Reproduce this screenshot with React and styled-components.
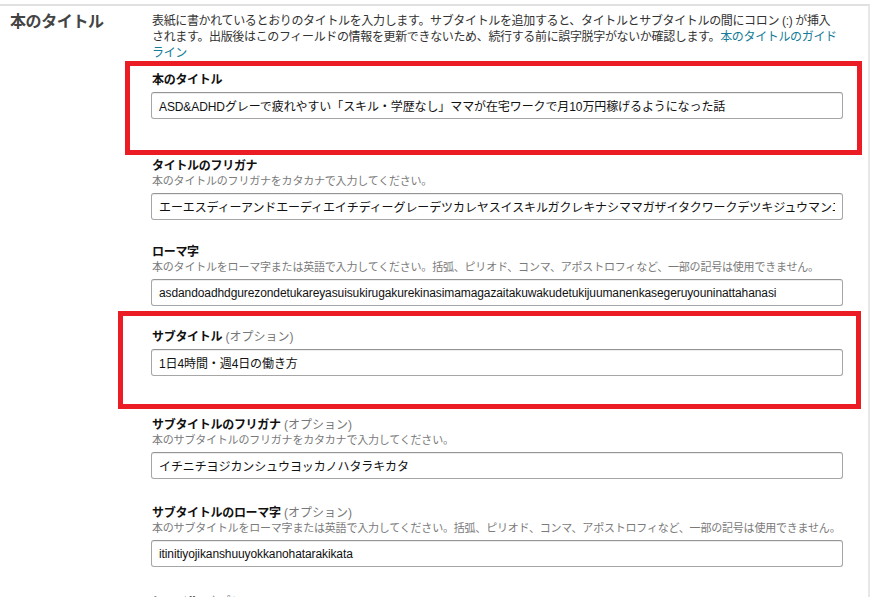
import styled, { createGlobalStyle } from "styled-components";

const GlobalStyle = createGlobalStyle`
  html, body {
    margin: 0;
    height: 100%;
    overflow: hidden;
    background: #fff;
  }
  body {
    font-family: "Liberation Sans", "Noto Sans CJK JP", sans-serif;
    color: #111;
  }
`;

const Page = styled.div`
  height: 100vh;
  overflow: hidden;
  padding-top: 4px;
  box-sizing: border-box;
`;

const Panel = styled.div`
  width: 870px;
  min-height: 100%;
  box-sizing: border-box;
  border-top: 2px solid #e0e0e0;
  border-right: 2px solid #e7e7e7;
`;

const Section = styled.div`
  display: grid;
  grid-template-columns: 151px 1fr;
  padding-top: 7px;
`;

const SectionTitle = styled.h2`
  margin: 0;
  padding-left: 10px;
  font-size: 16px;
  line-height: 18px;
  font-weight: 700;
  color: #444;
  letter-spacing: -0.4px;
`;

const Body = styled.div`
  display: flex;
  flex-direction: column;
  padding-right: 25px;
`;

const Description = styled.p`
  margin: 0 0 0 1px;
  font-size: 12px;
  line-height: 16px;
  color: #333;
  letter-spacing: -0.35px;
  white-space: nowrap;
`;

const GuideLink = styled.a`
  color: #137c98;
  text-decoration: none;
`;

const Highlight = styled.div`
  border: 5px solid #ec1c24;
  margin: 0 ${({ $mr }) => $mr}px ${({ $mb }) => $mb}px ${({ $ml }) => $ml}px;
  padding: ${({ $pt }) => $pt}px ${({ $pr }) => $pr}px
    ${({ $pb }) => $pb}px ${({ $pl }) => $pl}px;
`;

const Field = styled.div`
  display: flex;
  flex-direction: column;
  margin-bottom: ${({ $gap }) => $gap || 0}px;
`;

const Label = styled.div`
  padding-left: 1px;
  font-size: 12px;
  line-height: 16px;
  font-weight: 700;
  color: #111;
  letter-spacing: -0.3px;
  white-space: nowrap;
`;

const Optional = styled.span`
  font-weight: 400;
  color: #777;
  letter-spacing: 0;
`;

const Help = styled.div`
  padding-left: 1px;
  font-size: 11px;
  line-height: 15px;
  color: #7a7a7a;
  letter-spacing: -0.2px;
  white-space: nowrap;
`;

const TextInput = styled.input`
  margin-top: 4px;
  height: 27px;
  width: 100%;
  box-sizing: border-box;
  padding: 0 7px;
  border: 1px solid #a6a6a6;
  border-top-color: #949494;
  border-radius: 3px;
  box-shadow: inset 0 1px 0 rgba(0, 0, 0, 0.07);
  background: #fff;
  font-family: "Liberation Sans", "Noto Sans CJK JP", sans-serif;
  font-size: 12px;
  color: #111;
  letter-spacing: -0.1px;
  outline: none;
`;

const FormField = ({ label, optional, help, value, gap }) => (
  <Field $gap={gap}>
    <Label>
      {label}
      {optional && <Optional> (オプション)</Optional>}
    </Label>
    {help && <Help>{help}</Help>}
    <TextInput type="text" defaultValue={value} readOnly />
  </Field>
);

export default function App() {
  return (
    <>
      <GlobalStyle />
      <Page>
        <Panel>
          <Section>
            <SectionTitle>本のタイトル</SectionTitle>
            <Body>
              <Description>
                表紙に書かれているとおりのタイトルを入力します。サブタイトルを追加すると、タイトルとサブタイトルの間にコロン (:) が挿入
                <br />
                されます。出版後はこのフィールドの情報を更新できないため、続行する前に誤字脱字がないか確認します。
                <GuideLink href="#">
                  本のタイトルのガイド
                  <br />
                  ライン
                </GuideLink>
              </Description>

              <Highlight $ml={-26} $mr={-19} $mb={3} $pt={6} $pb={31} $pl={21} $pr={14}>
                <FormField
                  label="本のタイトル"
                  value="ASD&ADHDグレーで疲れやすい「スキル・学歴なし」ママが在宅ワークで月10万円稼げるようになった話"
                />
              </Highlight>

              <FormField
                label="タイトルのフリガナ"
                help="本のタイトルのフリガナをカタカナで入力してください。"
                value="エーエスディーアンドエーディエイチディーグレーデツカレヤスイスキルガクレキナシママガザイタクワークデツキジュウマンエンカセゲルヨウニナッタハナシ"
                gap={24}
              />
              <FormField
                label="ローマ字"
                help="本のタイトルをローマ字または英語で入力してください。括弧、ピリオド、コンマ、アポストロフィなど、一部の記号は使用できません。"
                value="asdandoadhdgurezondetukareyasuisukirugakurekinasimamagazaitakuwakudetukijuumanenkasegeruyouninattahanasi"
                gap={5}
              />

              <Highlight $ml={-33} $mr={-18} $mb={8} $pt={13} $pb={28} $pl={28} $pr={13}>
                <FormField label="サブタイトル" optional value="1日4時間・週4日の働き方" />
              </Highlight>

              <FormField
                label="サブタイトルのフリガナ"
                optional
                help="本のサブタイトルのフリガナをカタカナで入力してください。"
                value="イチニチヨジカンシュウヨッカノハタラキカタ"
                gap={26}
              />
              <FormField
                label="サブタイトルのローマ字"
                optional
                help="本のサブタイトルをローマ字または英語で入力してください。括弧、ピリオド、コンマ、アポストロフィなど、一部の記号は使用できません。"
                value="itinitiyojikanshuuyokkanohatarakikata"
                gap={27}
              />
              <FormField label="レーベル" optional value="" />
            </Body>
          </Section>
        </Panel>
      </Page>
    </>
  );
}
